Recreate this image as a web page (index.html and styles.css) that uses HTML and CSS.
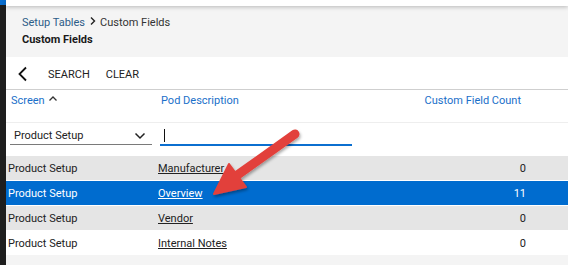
FILE: index.html
```html
<!DOCTYPE html>
<html lang="en">
<head>
    <meta charset="UTF-8">
    <meta name="viewport" content="width=device-width, initial-scale=1.0">
    <title>Custom Fields</title>
    <link rel="stylesheet" href="styles.css">
</head>
<body>
    <div class="app">
        <div class="rail"><div class="rail-top"></div></div>

        <div class="main">
            <div class="topbar"></div>

            <div class="page-header">
                <div class="crumbs">
                    <a href="#" class="crumb-link">Setup Tables</a>
                    <svg class="crumb-sep" width="8" height="10" viewBox="0 0 8 10"><path d="M2 1.5 L5.5 5 L2 8.5" fill="none" stroke="#222" stroke-width="1.4"/></svg>
                    <span>Custom Fields</span>
                </div>
                <div class="page-title">Custom Fields</div>
            </div>

            <div class="content">
                <div class="toolbar">
                    <button class="back-btn" aria-label="Back">
                        <svg width="12" height="16" viewBox="0 0 12 16"><path d="M9 1.5 L2.5 8 L9 14.5" fill="none" stroke="#111" stroke-width="1.8"/></svg>
                    </button>
                    <button class="tool-btn">SEARCH</button>
                    <button class="tool-btn">CLEAR</button>
                </div>

                <div class="grid">
                    <div class="grid-head">
                        <div class="col-screen">Screen
                            <svg width="10" height="8" viewBox="0 0 10 8"><path d="M1.5 5.5 L5 2 L8.5 5.5" fill="none" stroke="#333" stroke-width="1.3"/></svg>
                        </div>
                        <div class="col-pod">Pod Description</div>
                        <div class="col-count">Custom Field Count</div>
                    </div>

                    <div class="grid-filter">
                        <div class="col-screen">
                            <div class="select">
                                <span>Product Setup</span>
                                <svg width="12" height="8" viewBox="0 0 12 8"><path d="M1.5 1.5 L6 6 L10.5 1.5" fill="none" stroke="#222" stroke-width="1.5"/></svg>
                            </div>
                        </div>
                        <div class="col-pod">
                            <div class="text-input"><span class="caret"></span></div>
                        </div>
                        <div class="col-count"></div>
                    </div>

                    <div class="grid-row shaded">
                        <div class="col-screen">Product Setup</div>
                        <div class="col-pod"><a href="#">Manufacturer</a></div>
                        <div class="col-count">0</div>
                    </div>
                    <div class="grid-row selected">
                        <div class="col-screen">Product Setup</div>
                        <div class="col-pod"><a href="#">Overview</a></div>
                        <div class="col-count">11</div>
                    </div>
                    <div class="grid-row shaded">
                        <div class="col-screen">Product Setup</div>
                        <div class="col-pod"><a href="#">Vendor</a></div>
                        <div class="col-count">0</div>
                    </div>
                    <div class="grid-row">
                        <div class="col-screen">Product Setup</div>
                        <div class="col-pod"><a href="#">Internal Notes</a></div>
                        <div class="col-count">0</div>
                    </div>
                </div>
            </div>
        </div>
    </div>

    <!-- annotation arrow drawn over the grid -->
    <svg class="callout" width="568" height="265" viewBox="0 0 568 265">
        <defs>
            <filter id="shadow" x="-20%" y="-20%" width="140%" height="140%">
                <feDropShadow dx="1" dy="2" stdDeviation="1.5" flood-color="#000" flood-opacity="0.35"/>
            </filter>
        </defs>
        <g filter="url(#shadow)" fill="#e2413b" stroke="#e2413b" stroke-linejoin="round">
            <line x1="295" y1="134" x2="236" y2="176" stroke-width="9" stroke-linecap="round"/>
            <polygon points="214,194 229,164 246,187" stroke-width="2"/>
        </g>
    </svg>
</body>
</html>
```

FILE: styles.css
```css
body {
    margin: 0;
    font-family: Roboto, "Liberation Sans", Arial, sans-serif;
    font-size: 11px;
    color: #222;
    background-color: #f4f4f4;
}
.app {
    display: flex;
    height: 265px;
    overflow: hidden;
}
.rail {
    width: 6px;
    background-color: #1e1e1e;
    flex-shrink: 0;
}
.rail-top {
    height: 5px;
    background-color: #0b6fd0;
}
.main {
    flex: 1;
    display: flex;
    flex-direction: column;
    background-color: #f4f4f4;
}
.topbar {
    height: 6px;
    background-color: white;
    box-shadow: 0 1px 4px rgba(0, 0, 0, 0.25);
    position: relative;
}
.page-header {
    height: 51px;
    padding: 8px 0 0 16px;
    box-sizing: border-box;
}
.crumbs {
    display: flex;
    align-items: center;
    font-size: 11px;
    height: 16px;
    color: #333;
}
.crumb-link {
    color: #2d5d88;
    text-decoration: none;
}
.crumb-sep {
    margin: 0 3px 2px 4px;
}
.page-title {
    font-weight: bold;
    margin-top: 3px;
    color: #1a1a1a;
}
.content {
    background-color: white;
}
.toolbar {
    display: flex;
    align-items: center;
    height: 32px;
    border-bottom: 1px solid #cfcfcf;
}
.toolbar button {
    background: none;
    border: none;
    padding: 0;
    font-family: inherit;
    font-size: 11px;
    color: #222;
    cursor: pointer;
}
.back-btn {
    margin-left: 11px;
    margin-right: 19px;
    height: 16px;
    margin-top: 2px;
}
.tool-btn {
    margin-right: 16px;
    margin-top: 3px;
}
.grid-head, .grid-filter, .grid-row {
    display: grid;
    grid-template-columns: 149px 248px 125px;
    align-items: center;
}
.grid-head {
    height: 32px;
    align-items: start;
    border-bottom: 1px solid #eeeeee;
    color: #1a6fc9;
}
.grid-head > div {
    padding-top: 4px;
}
.grid-head .col-screen {
    padding-left: 5px;
}
.grid-head .col-pod {
    padding-left: 6px;
}
.grid-head .col-screen svg {
    margin-left: 1px;
    vertical-align: 1px;
}
.grid-head .col-count {
    padding-right: 7px;
}
.grid-filter {
    height: 32px;
    align-items: start;
}
.select {
    margin: 4px 0 0 4px;
    width: 142px;
    height: 18px;
    border-bottom: 1px solid #7a7a7a;
    display: flex;
    justify-content: space-between;
    align-items: center;
    padding: 0 6px 0 4px;
    box-sizing: border-box;
    font-size: 11px;
}
.text-input {
    margin: 4px 0 0 5px;
    width: 192px;
    height: 17px;
    border-bottom: 2px solid #0b6fd0;
    display: flex;
    align-items: center;
}
.caret {
    display: inline-block;
    width: 1px;
    height: 13px;
    margin-left: 4px;
    background-color: #111;
}
.grid-row {
    height: 25px;
    border-top: 1px solid white;
    box-sizing: border-box;
    background-color: white;
}
.grid-row:first-of-type {
    border-top: none;
}
.grid-row.shaded {
    background-color: #e5e5e5;
}
.grid-row.selected {
    background-color: #006ccf;
    color: white;
}
.grid-row .col-screen {
    padding-left: 2px;
}
.grid-row .col-pod {
    padding-left: 3px;
}
.grid-row a {
    color: #222;
}
.grid-row.selected a {
    color: white;
}
.col-count {
    text-align: right;
}
.grid-row .col-count {
    padding-right: 2px;
}
.callout {
    position: absolute;
    left: 0;
    top: 0;
    pointer-events: none;
}
```
